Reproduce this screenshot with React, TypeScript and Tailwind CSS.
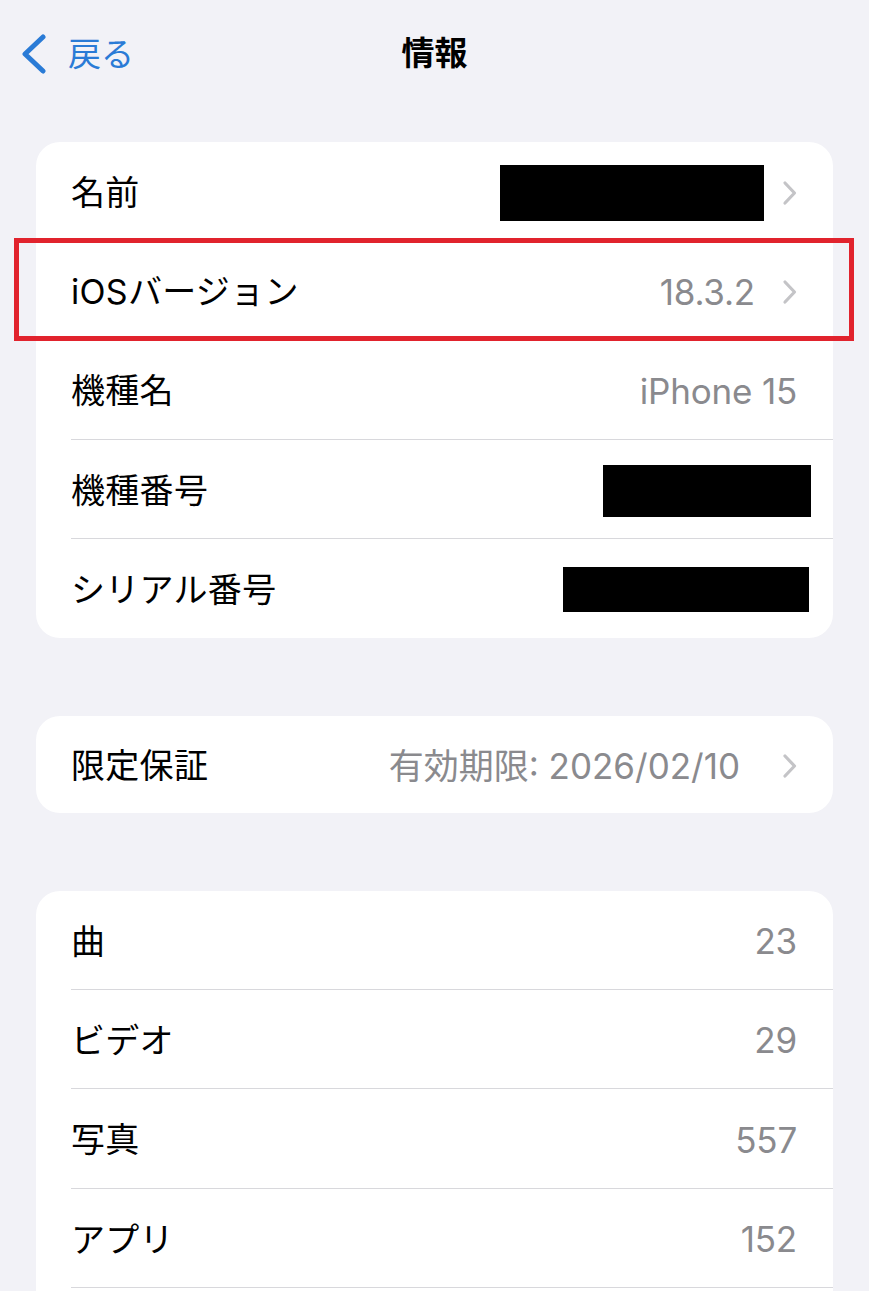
import React from "react";

const font = {
  fontFamily: '"Inter", "Noto Sans CJK JP", "Noto Sans", sans-serif',
};

const Chevron = () => (
  <svg width="18" height="30" viewBox="0 0 18 30" className="ml-[24px] shrink-0">
    <path
      d="M6 5 L15.5 15 L6 25"
      fill="none"
      stroke="#c4c4c7"
      strokeWidth="3.2"
      strokeLinecap="round"
      strokeLinejoin="round"
    />
  </svg>
);

type RowProps = {
  label?: string;
  value?: React.ReactNode;
  chevron?: boolean;
  last?: boolean;
  h?: string;
  children?: React.ReactNode;
};

const Row = ({ label, value, chevron, last, h = "h-[99.2px]", children }: RowProps) => (
  <div className={`relative flex ${h} pl-[35px]`}>
    <div
      className={`flex flex-1 items-center justify-between pr-[36px] pt-[3px] ${
        last ? "" : "border-b border-[#d8d8dc]"
      }`}
    >
      <span className="text-[34px] text-black tracking-[0.3px]">{label}</span>
      <div className="flex items-center">
        {typeof value === "string" ? (
          <span className="text-[35px] text-[#8a8a8e] tracking-[-0.2px]">{value}</span>
        ) : (
          value
        )}
        {chevron && <Chevron />}
      </div>
    </div>
    {children}
  </div>
);

const Redacted = ({ cls }: { cls: string }) => <div className={`bg-black ${cls}`} />;

export default function App() {
  return (
    <div className="h-screen w-full bg-[#f2f2f7] overflow-hidden" style={font}>
      {/* nav bar */}
      <div className="relative flex h-[110px] items-center justify-center">
        <button className="absolute left-[20px] top-[34px] flex items-center gap-[21px] text-[#2a7bd6]">
          <svg width="27" height="40" viewBox="0 0 27 40">
            <path
              d="M23 3 L5 20 L23 37"
              fill="none"
              stroke="#2a7bd6"
              strokeWidth="5"
              strokeLinecap="round"
              strokeLinejoin="round"
            />
          </svg>
          <span className="text-[33px] leading-none">戻る</span>
        </button>
        <h1 className="text-[33px] font-bold text-black -mt-[2px]">情報</h1>
      </div>

      <div className="mt-[32px] px-[36px] flex flex-col gap-[78px]">
        <div className="bg-white rounded-[24px]">
          <Row label="名前" chevron value={<Redacted cls="w-[264px] h-[56px] -mr-[9px] mt-[1px]" />} />
          <Row label="iOSバージョン" value="18.3.2" chevron>
            <div className="pointer-events-none absolute -left-[22px] -right-[21px] -top-[3px] -bottom-[1px] border-[5px] border-[#e1232d]" />
          </Row>
          <Row label="機種名" value="iPhone 15" />
          <Row label="機種番号" value={<Redacted cls="w-[208px] h-[52px] -mr-[14px] mt-[1px]" />} />
          <Row label="シリアル番号" last value={<Redacted cls="w-[246px] h-[45px] -mr-[12px] -mt-[1px]" />} />
        </div>

        <div className="bg-white rounded-[24px]">
          <Row
            label="限定保証"
            value={
              <span className="mr-[15px] text-[35px] text-[#8a8a8e] tracking-[0px]">
                有効期限: 2026/02/10
              </span>
            }
            chevron
            last
            h="h-[97px]"
          />
        </div>

        <div className="bg-white rounded-t-[24px]">
          <Row label="曲" value="23" />
          <Row label="ビデオ" value="29" />
          <Row label="写真" value="557" />
          <Row label="アプリ" value="152" />
          <Row last />
        </div>
      </div>
    </div>
  );
}
